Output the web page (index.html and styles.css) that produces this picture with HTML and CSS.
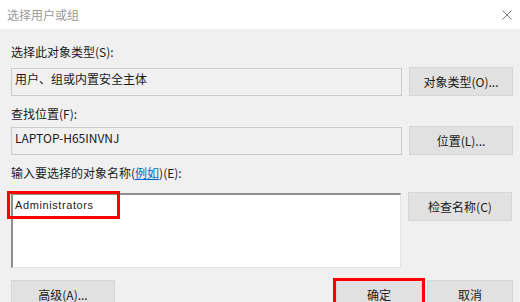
FILE: index.html
```html
<!DOCTYPE html>
<html lang="zh-CN">
<head>
    <meta charset="UTF-8">
    <title>选择用户或组</title>
    <link rel="stylesheet" href="styles.css">
</head>
<body>
    <div class="dialog">
        <div class="titlebar">
            <span class="title">选择用户或组</span>
            <svg class="close" width="10" height="10" viewBox="0 0 10 10">
                <path d="M0.5 0.5 L9.5 9.5 M9.5 0.5 L0.5 9.5" stroke="#7a7a7a" stroke-width="1" fill="none"/>
            </svg>
        </div>
        <div class="content">
            <div class="label first">选择此对象类型(S):</div>
            <div class="row">
                <div class="field">用户、组或内置安全主体</div>
                <button class="btn side">对象类型(O)...</button>
            </div>

            <div class="label">查找位置(F):</div>
            <div class="row">
                <div class="field">LAPTOP-H65INVNJ</div>
                <button class="btn side">位置(L)...</button>
            </div>

            <div class="label">输入要选择的对象名称(<a href="#" class="link">例如</a>)(E):</div>
            <div class="row names-row">
                <div class="names">Administrators</div>
                <button class="btn side">检查名称(C)</button>
                <div class="mark mark-names"></div>
            </div>

            <div class="actions">
                <button class="btn wide">高级(A)...</button>
                <div class="spacer"></div>
                <div class="ok-wrap">
                    <button class="btn small">确定</button>
                    <div class="mark mark-ok"></div>
                </div>
                <button class="btn small">取消</button>
            </div>
        </div>
    </div>
</body>
</html>
```

FILE: styles.css
```css
body, html {
    margin: 0;
    padding: 0;
    background-color: #f0f0f0;
    font-family: "Noto Sans CJK SC", "Liberation Sans", sans-serif;
    font-size: 12px;
    color: #1a1a1a;
    overflow: hidden;
}
.dialog {
    height: 302px;
    overflow: hidden;
}
.titlebar {
    height: 29px;
    background-color: #ffffff;
    display: flex;
    align-items: center;
    justify-content: space-between;
    padding: 0 8px 0 7px;
}
.title {
    color: #9a9a9a;
    line-height: 29px;
}
.close {
    margin-top: 1px;
}
.content {
    padding: 0 7px 0 11px;
}
.label {
    line-height: 16px;
    margin-top: 10px;
    margin-bottom: 5px;
}
.label.first {
    margin-top: 15px;
    margin-bottom: 8px;
}
.link {
    color: #0066cc;
    text-decoration: underline;
}
.row {
    display: flex;
    align-items: flex-start;
    gap: 7px;
    position: relative;
}
.field {
    width: 391px;
    height: 28px;
    box-sizing: border-box;
    border: 1px solid #cbcbcb;
    padding: 2px 3px;
    line-height: 16px;
}
.btn {
    font-family: "Noto Sans CJK SC", "Liberation Sans", sans-serif;
    font-size: 12px;
    color: #1a1a1a;
    background-color: #e1e1e1;
    border: 1px solid #d6d6d6;
    height: 29px;
    padding: 0;
    box-sizing: border-box;
    margin: 0;
}
.btn.side {
    width: 104px;
    margin-top: -1px;
}
.names-row {
    margin-top: 12px;
}
.names {
    width: 390px;
    height: 75px;
    box-sizing: border-box;
    background-color: #ffffff;
    border-top: 2px solid #8e8e8e;
    border-left: 2px solid #8e8e8e;
    border-right: 1px solid #e3e3e3;
    border-bottom: 1px solid #e3e3e3;
    padding: 3px 2px;
    font-family: "Liberation Sans", sans-serif;
    font-size: 11px;
    letter-spacing: 0.6px;
    line-height: 14px;
    color: #222;
}
.actions {
    display: flex;
    align-items: flex-start;
    margin-top: 12px;
}
.spacer {
    flex: 1;
}
.btn.wide {
    width: 104px;
}
.btn.small {
    width: 86px;
}
.ok-wrap {
    position: relative;
    margin-right: 5px;
}
.mark {
    position: absolute;
    border: 3px solid #ff0000;
    box-sizing: border-box;
}
.mark-names {
    left: -4px;
    top: -2px;
    width: 113px;
    height: 28px;
}
.mark-ok {
    left: -3px;
    top: -2px;
    width: 92px;
    height: 40px;
}
```
